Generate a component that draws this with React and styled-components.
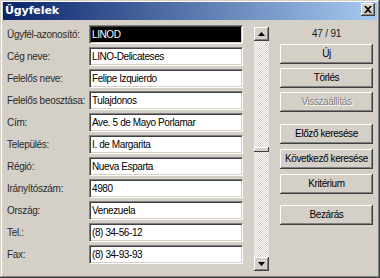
import React from "react";
import styled, { createGlobalStyle } from "styled-components";

const Global = createGlobalStyle`
  html, body { margin: 0; padding: 0; background: #d4d0c8; }
  body { font-family: "Liberation Sans", Arial, sans-serif; }
  * { box-sizing: border-box; }
`;

const Window = styled.div`
  width: 380px;
  height: 278px;
  background: #d4d0c8;
  padding: 2px 3px 3px 3px;
  display: flex;
  flex-direction: column;
  box-shadow: inset -1px -1px #404040, inset 1px 1px #d4d0c8,
    inset -2px -2px #808080, inset 2px 2px #ffffff;
  overflow: hidden;
`;

const TitleBar = styled.div`
  height: 18px;
  flex: none;
  display: flex;
  align-items: flex-start;
  justify-content: space-between;
  background: linear-gradient(to right, #0a246a, #a6caf0);
  padding: 0 2px 0 2px;
`;

const Title = styled.span`
  color: #fff;
  font-family: "DejaVu Sans", Verdana, sans-serif;
  font-weight: bold;
  font-size: 11px;
  line-height: 18px;
  letter-spacing: -0.1px;
`;

const CloseBtn = styled.div`
  width: 14px;
  height: 13px;
  margin-top: 1px;
  background: #d4d0c8;
  box-shadow: inset -1px -1px #404040, inset 1px 1px #ffffff,
    inset -2px -2px #808080;
  display: flex;
  align-items: center;
  justify-content: center;
`;

const Body = styled.div`
  display: flex;
  align-items: flex-start;
  padding: 5px 0 0 4px;
`;

const Form = styled.div`
  display: grid;
  grid-template-columns: 82px 154px;
  grid-auto-rows: 19px;
  row-gap: 3px;
`;

const Label = styled.div`
  font-size: 10px;
  letter-spacing: -0.3px;
  color: #2a2a2a;
  display: flex;
  align-items: center;
  padding-bottom: 1px;
  white-space: nowrap;
`;

const Field = styled.div`
  height: 19px;
  border: 1px solid;
  border-color: #808080 #ffffff #ffffff #808080;
  box-shadow: inset 1px 1px #404040, inset -1px -1px #d4d0c8;
  background: ${(p) => (p.$selected ? "#000" : "#fff")};
  color: ${(p) => (p.$selected ? "#fff" : "#000")};
  font-size: 10px;
  letter-spacing: -0.4px;
  display: flex;
  align-items: center;
  padding: 0 0 1px 2px;
  white-space: nowrap;
  overflow: hidden;
`;

const ScrollBar = styled.div`
  width: 15px;
  height: 244px;
  margin: 2px 0 0 11px;
  display: flex;
  flex-direction: column;
  background-color: #d4d0c8;
  background-image: conic-gradient(#ffffff 25%, #d4d0c8 0 50%, #ffffff 0 75%, #d4d0c8 0);
  background-size: 2px 2px;
`;

const ScrollBtn = styled.div`
  height: 14px;
  flex: none;
  background: #d4d0c8;
  box-shadow: inset -1px -1px #404040, inset 1px 1px #ffffff,
    inset -2px -2px #808080;
  display: flex;
  align-items: center;
  justify-content: center;
`;

const Track = styled.div`
  flex: 1;
  position: relative;
`;

const Thumb = styled.div`
  position: absolute;
  left: 0;
  right: 0;
  height: 5px;
  background: #d4d0c8;
  box-shadow: inset -1px -1px #404040, inset 1px 1px #ffffff;
`;

const Side = styled.div`
  width: 93px;
  margin-left: 11px;
  display: flex;
  flex-direction: column;
`;

const Counter = styled.div`
  height: 19px;
  font-size: 10px;
  letter-spacing: -0.2px;
  color: #1a1a1a;
  display: flex;
  align-items: center;
  justify-content: center;
  padding-bottom: 2px;
`;

const Button = styled.div`
  height: 20px;
  margin-top: ${(p) => p.$gap}px;
  background: #d4d0c8;
  box-shadow: inset -1px -1px #404040, inset 1px 1px #ffffff,
    inset -2px -2px #808080, inset 2px 2px #d4d0c8;
  font-size: 10px;
  letter-spacing: -0.4px;
  display: flex;
  align-items: center;
  justify-content: center;
  padding-bottom: 1px;
  color: ${(p) => (p.$disabled ? "#808080" : "#000")};
  text-shadow: ${(p) => (p.$disabled ? "1px 1px #ffffff" : "none")};
  white-space: nowrap;
`;

const fields = [
  ["Ügyfél-azonosító:", "LINOD", true],
  ["Cég neve:", "LINO-Delicateses"],
  ["Felelős neve:", "Felipe Izquierdo"],
  ["Felelős beosztása:", "Tulajdonos"],
  ["Cím:", "Ave. 5 de Mayo Porlamar"],
  ["Település:", "I. de Margarita"],
  ["Régió:", "Nueva Esparta"],
  ["Irányítószám:", "4980"],
  ["Ország:", "Venezuela"],
  ["Tel.:", "(8) 34-56-12"],
  ["Fax:", "(8) 34-93-93"],
];

const buttons = [
  ["Új", 0],
  ["Törlés", 4],
  ["Visszaállítás", 4, true],
  ["Előző keresése", 12],
  ["Következő keresése", 5],
  ["Kritérium", 5],
  ["Bezárás", 11],
];

const current = 47;
const total = 91;
const trackLen = 216;
const thumbH = 5;

export default function App() {
  const thumbTop = Math.round(((current - 1) / (total - 1)) * (trackLen - thumbH)) - 2;
  return (
    <>
      <Global />
      <Window>
        <TitleBar>
          <Title>Ügyfelek</Title>
          <CloseBtn>
            <svg width="8" height="7" viewBox="0 0 8 7">
              <path d="M0 0h2l2 2 2-2h2L5 3.5 8 7H6L4 5 2 7H0l3-3.5z" fill="#000" />
            </svg>
          </CloseBtn>
        </TitleBar>
        <Body>
          <Form>
            {fields.map(([l, v, sel]) => (
              <React.Fragment key={l}>
                <Label>{l}</Label>
                <Field $selected={sel}>{v}</Field>
              </React.Fragment>
            ))}
          </Form>
          <ScrollBar>
            <ScrollBtn>
              <svg width="7" height="4" viewBox="0 0 7 4">
                <path d="M3.5 0L7 4H0z" fill="#000" />
              </svg>
            </ScrollBtn>
            <Track>
              <Thumb style={{ top: thumbTop }} />
            </Track>
            <ScrollBtn>
              <svg width="7" height="4" viewBox="0 0 7 4">
                <path d="M0 0h7L3.5 4z" fill="#000" />
              </svg>
            </ScrollBtn>
          </ScrollBar>
          <Side>
            <Counter>
              {current} / {total}
            </Counter>
            {buttons.map(([t, g, d]) => (
              <Button key={t} $gap={g} $disabled={d}>
                {t}
              </Button>
            ))}
          </Side>
        </Body>
      </Window>
    </>
  );
}
